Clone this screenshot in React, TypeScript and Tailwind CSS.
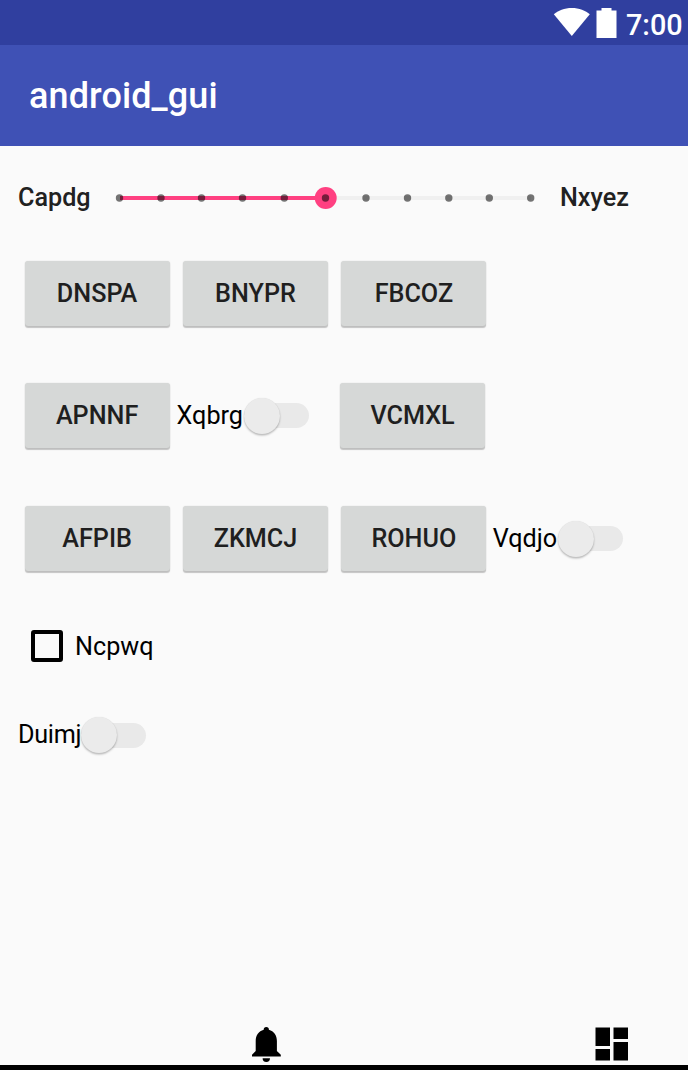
import React from "react";

const TICKS = [119.5, 161, 201.5, 242.5, 284.3, 325.5, 366, 407.5, 448.8, 489.3, 530.7];

function RaisedButton({ label }: { label: string }) {
  return (
    <button className="flex h-[65px] w-[145px] shrink-0 items-center justify-center rounded-[3px] bg-[#d6d8d7] pt-px text-[25.2px] leading-[30px] font-medium text-[#1f1f1f] shadow-[0_1.5px_1px_rgba(0,0,0,0.22),0_0_1.5px_rgba(0,0,0,0.12)]">
      {label}
    </button>
  );
}

function Toggle() {
  return (
    <span className="flex h-[25px] w-[65px] shrink-0 items-center rounded-full bg-[#e9e9e9]">
      <span className="size-9 shrink-0 rounded-full bg-[#ebebeb] shadow-[0_1.5px_2px_rgba(0,0,0,0.25),0_0_1px_rgba(0,0,0,0.1)]" />
    </span>
  );
}

function LabeledToggle({ label, width }: { label: string; width: string }) {
  return (
    <label className="flex items-center text-[25.2px] leading-[30px] text-black">
      <span className={`${width} whitespace-nowrap`}>{label}</span>
      <Toggle />
    </label>
  );
}

function Discrete() {
  return (
    <svg className="shrink-0" width="436" height="30" viewBox="107 183 436 30">
      <path d="M325 198H531" stroke="#f0f0f0" strokeWidth="4" />
      <path d="M120 198H325" stroke="#ff4081" strokeWidth="4" />
      <circle cx="325.7" cy="198" r="11" fill="#ff4081" />
      {TICKS.map((x) => (
        <circle key={x} cx={x} cy="198" r="3.7" fill="#000" fillOpacity="0.54" />
      ))}
    </svg>
  );
}

export default function App() {
  return (
    <div className="flex h-[1070px] w-[688px] flex-col overflow-hidden bg-[#fafafa] font-['Roboto',sans-serif]">
      <div className="flex h-[45px] shrink-0 items-center justify-end bg-[#303f9f] pr-[6px] text-white">
        <svg width="72" height="45" viewBox="548 0 72 45" fill="#fff">
          <path d="M571.8 36 553.8 14.3C558 10.7 564.5 8 571.8 8s13.8 2.7 18 6.3Z" />
          <path d="M601.5 8h10v2.5h5V38h-20V10.500h5Z" />
        </svg>
        <span className="mt-1 ml-[6px] w-14 text-[28.8px] leading-[34px] font-medium whitespace-nowrap">7:00</span>
      </div>
      <header className="flex h-[101px] shrink-0 items-center bg-[#3f51b5] pl-[29px]">
        <h1 className="text-[36px] leading-[42px] font-medium tracking-[0.1px] text-white">android_gui</h1>
      </header>
      <main className="flex grow flex-col">
        <div className="flex h-[104px] items-center pl-[18px] text-[25.2px] leading-[30px] font-medium text-[#212121]">
          <span className="w-[89px]">Capdg</span>
          <Discrete />
          <span className="ml-[17px]">Nxyez</span>
        </div>
        <div className="mt-[11px] flex items-center gap-[13.400px] pl-[24.600px]">
          <RaisedButton label="DNSPA" />
          <RaisedButton label="BNYPR" />
          <RaisedButton label="FBCOZ" />
        </div>
        <div className="mt-[57px] flex items-center pl-[24.600px]">
          <RaisedButton label="APNNF" />
          <div className="ml-[7px] w-[163.500px]">
            <LabeledToggle label="Xqbrg" width="w-[67px]" />
          </div>
          <RaisedButton label="VCMXL" />
        </div>
        <div className="mt-[58px] flex items-center gap-[13.400px] pl-[24.600px]">
          <RaisedButton label="AFPIB" />
          <RaisedButton label="ZKMCJ" />
          <RaisedButton label="ROHUO" />
          <div className="-ml-[7px]">
            <LabeledToggle label="Vqdjo" width="w-[65px]" />
          </div>
        </div>
        <label className="mt-[59px] flex h-8 items-center pl-[31px] text-[25.2px] leading-[30px] text-black">
          <span className="size-8 rounded-[3px] border-4 border-black" />
          <span className="ml-3 pt-px">Ncpwq</span>
        </label>
        <div className="mt-[58px] flex pl-[18px] tracking-[-0.300px]">
          <LabeledToggle label="Duimj" width="w-[63px]" />
        </div>
      </main>
      <nav className="flex h-[60px] shrink-0 items-end border-b-[5px] border-black">
        <svg className="ml-[244px]" width="44" height="43" viewBox="244 1022 44 43">
          <path d="M252 1056.500v-1.800l3.700-3.700v-10c0-5.500 3-9.900 8-11.200v-.2a2.600 2.600 0 0 1 5.200 0v.2c5 1.300 8 5.700 8 11.200v10l3.900 3.700v1.800Z" />
          <path d="M262.600 1058.300h7.400a3.700 3.700 0 0 1-7.400 0Z" />
        </svg>
        <svg className="ml-[300px]" width="50" height="43" viewBox="588 1022 50 43">
          <path d="M595.500 1027.500H610V1046H595.500ZM613.500 1027.500H628V1039H613.500ZM595.500 1049H610V1060.500H595.500ZM613.500 1042H628V1060.500H613.500Z" />
        </svg>
      </nav>
    </div>
  );
}
